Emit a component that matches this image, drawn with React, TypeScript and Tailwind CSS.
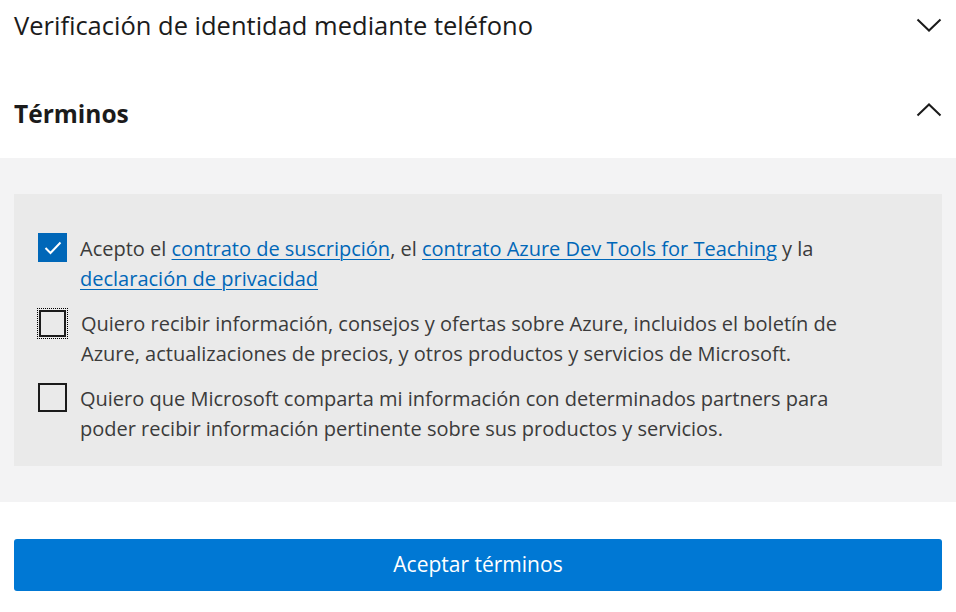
function Chevron({ up }: { up?: boolean }) {
  return (
    <svg width="26" height="14" viewBox="0 0 26 14" fill="none" className="text-[#1b1b1b]">
      <path
        d={up ? "M1.5 12.5 L13 1.5 L24.5 12.5" : "M1.5 1.5 L13 12.5 L24.5 1.5"}
        stroke="currentColor"
        strokeWidth="2"
      />
    </svg>
  );
}

function Box({ checked, focus }: { checked?: boolean; focus?: boolean }) {
  if (checked) {
    return (
      <div className="w-[29px] h-[29px] bg-[#0067b8] flex items-center justify-center shrink-0">
        <svg width="18" height="14" viewBox="0 0 18 14" fill="none">
          <path d="M1.5 7 L6.5 12 L16.5 1.5" stroke="white" strokeWidth="2" />
        </svg>
      </div>
    );
  }
  if (focus) {
    return (
      <div className="w-[31px] h-[31px] border border-dotted border-black p-px shrink-0 -ml-px">
        <div className="w-full h-full border-2 border-[#1b1b1b]" />
      </div>
    );
  }
  return <div className="w-[29px] h-[29px] border-2 border-[#1b1b1b] shrink-0" />;
}

const link = "text-[#0067b8] underline underline-offset-[3px] decoration-1";

export default function App() {
  return (
    <div className="w-[956px] h-[612px] bg-white text-[#1b1b1b] font-['Open_Sans',sans-serif] overflow-hidden">
      <div className="flex items-center justify-between pl-[14px] pr-[14px] h-[50px]">
        <span className="text-[25.5px]">Verificación de identidad mediante teléfono</span>
        <Chevron />
      </div>
      <div className="flex items-center justify-between pl-[14px] pr-[14px] h-[70px] mt-[25px]">
        <span className="text-[24.5px] font-bold mt-[8px]">Términos</span>
        <Chevron up />
      </div>
      <div className="bg-[#f3f3f4] mt-[13px] pt-[36px] pb-[36px] px-[14px]">
        <div className="bg-[#eaeaea] pt-[39px] pb-[22px] pl-[24px] pr-[24px] flex flex-col gap-[14px] text-[#3b3b3b] text-[20px] leading-[30px]">
          <div className="flex gap-[13px] items-start">
            <Box checked />
            <p className="mt-[1px]">
              Acepto el <a className={link}>contrato de suscripción</a>, el{" "}
              <a className={link}>contrato Azure Dev Tools for Teaching</a> y la
              <br />
              <a className={link}>declaración de privacidad</a>
            </p>
          </div>
          <div className="flex gap-[13px] items-start">
            <Box focus />
            <p className="mt-[1px]">
              Quiero recibir información, consejos y ofertas sobre Azure, incluidos el boletín de
              <br />
              Azure, actualizaciones de precios, y otros productos y servicios de Microsoft.
            </p>
          </div>
          <div className="flex gap-[13px] items-start">
            <Box />
            <p className="mt-[1px]">
              Quiero que Microsoft comparta mi información con determinados partners para
              <br />
              poder recibir información pertinente sobre sus productos y servicios.
            </p>
          </div>
        </div>
      </div>
      <div className="px-[14px] pt-[37px]">
        <button className="w-full h-[52px] bg-[#0078d4] rounded-[3px] text-white text-[21px]">
          Aceptar términos
        </button>
      </div>
    </div>
  );
}
